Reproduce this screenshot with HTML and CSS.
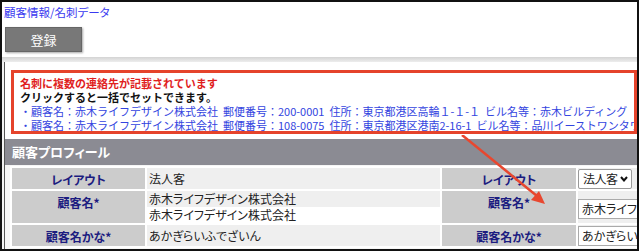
FILE: index.html
```html
<!DOCTYPE html>
<html lang="ja">

<head>
    <meta charset="UTF-8">
    <meta name="viewport" content="width=device-width, initial-scale=1.0">
    <title>名刺データ</title>
    <link rel="stylesheet" href="styles.css">
</head>

<body>
    <div class="frame">
        <div class="crumb"><a href="#">顧客情報/名刺データ</a></div>
        <div class="toolbar">
            <button class="btn">登録</button>
        </div>

        <div class="main">
            <div class="panel">
                <div class="notice">
                    <div class="notice-title">名刺に複数の連絡先が記載されています</div>
                    <div class="notice-sub">クリックすると一括でセットできます。</div>
                    <div class="contact">・顧客名：赤木ライフデザイン株式会社&nbsp; 郵便番号：200-0001&nbsp; 住所：東京都港区高輪１-１-１&nbsp; ビル名等：赤木ビルディング</div>
                    <div class="contact">・顧客名：赤木ライフデザイン株式会社&nbsp; 郵便番号：108-0075&nbsp; 住所：東京都港区港南2-16-1&nbsp; ビル名等：品川イーストワンタワー</div>
                </div>

                <div class="section-head">顧客プロフィール</div>
                <div class="section-body">
                    <table class="profile">
                        <colgroup>
                            <col class="c-label">
                            <col class="c-value">
                            <col class="c-label2">
                            <col class="c-edit">
                        </colgroup>
                        <tr class="row-short">
                            <th>レイアウト</th>
                            <td class="val">法人客</td>
                            <th>レイアウト</th>
                            <td class="val edit">
                                <div class="select">法人客
                                    <svg width="8" height="6" viewBox="0 0 8 6"><path d="M1 1 L4 4.5 L7 1" fill="none" stroke="#111" stroke-width="2"/></svg>
                                </div>
                            </td>
                        </tr>
                        <tr class="row-tall">
                            <th>顧客名*</th>
                            <td class="val multi">
                                <div class="line">赤木ライフデザイン株式会社</div>
                                <div class="line alt">赤木ライフデザイン株式会社</div>
                            </td>
                            <th>顧客名*</th>
                            <td class="val edit"><div class="input input-mid">赤木ライフデザイン株式会社</div></td>
                        </tr>
                        <tr class="row-short">
                            <th>顧客名かな*</th>
                            <td class="val">あかぎらいふでざいん</td>
                            <th>顧客名かな*</th>
                            <td class="val edit"><div class="input">あかぎらいふでざいん</div></td>
                        </tr>
                    </table>
                </div>

                <!-- arrow from the notice box down to the name field -->
                <svg class="arrow" width="120" height="90" viewBox="0 0 120 90">
                    <line x1="2" y1="0" x2="77" y2="61" stroke="#e8472f" stroke-width="2.5"/>
                    <polygon points="85,69 71,65 79,56" fill="#e8472f"/>
                </svg>
            </div>
        </div>
    </div>
</body>

</html>
```

FILE: styles.css
```css
body {
    margin: 0;
    background: #fff;
    font-family: "Noto Sans CJK JP", "Noto Sans", sans-serif;
    font-size: 12px;
}

.frame {
    width: 639px;
    height: 251px;
    border: 2px solid #111;
    box-sizing: border-box;
    overflow: hidden;
}

.crumb {
    padding: 2px 0 0 2px;
    height: 20px;
    line-height: 16px;
}

.crumb a {
    color: #3a3af0;
    text-decoration: none;
    font-size: 11.5px;
    font-feature-settings: "palt";
}

.toolbar {
    padding: 3px 0 0 3px;
    height: 33px;
    box-sizing: border-box;
}

.btn {
    width: 77px;
    height: 25px;
    background: #787878;
    color: #fff;
    border: 1px solid #666;
    box-shadow: 1px 1px 2px rgba(0, 0, 0, 0.35);
    font-family: inherit;
    font-size: 13px;
    cursor: pointer;
}

.main {
    border-top: 1px solid #d6d6d6;
    background: linear-gradient(#d9d9d9, #f2f2f2 5px);
    padding: 4px 0 0 2px;
    height: 200px;
}

.panel {
    position: relative;
    border-left: 1px solid #555;
    background: #fff;
    height: 100%;
    padding: 8px 0 0 0;
    box-sizing: border-box;
}

.notice {
    margin-left: 6px;
    border: 3px solid #e5432b;
    padding: 2px 0 1px 6px;
    height: 55px;
    font-size: 11px;
    line-height: 14px;
    white-space: nowrap;
    overflow: hidden;
}

.notice-title {
    color: #e01e1e;
    font-weight: bold;
    margin-top: 1px;
}

.notice-sub {
    color: #111;
    font-weight: bold;
}

.contact {
    color: #3344e0;
}

.section-head {
    margin-top: 5px;
    background: #8b8b93;
    color: #fff;
    font-weight: bold;
    font-size: 13px;
    height: 26px;
    line-height: 26px;
    padding-left: 7px;
    font-feature-settings: "palt";
}

.section-body {
    background: #f5f5f5;
    padding: 1px 0 0 5px;
    height: 90px;
    overflow: hidden;
}

.profile {
    table-layout: fixed;
    width: 780px;
    border-collapse: separate;
    border-spacing: 2px;
    background: #fff;
    white-space: nowrap;
}

.c-label {
    width: 133px;
}

.c-value {
    width: 293px;
}

.c-label2 {
    width: 134px;
}

.c-edit {
    width: 210px;
}

.profile th {
    background: #cccccc;
    color: #1c1c80;
    font-weight: bold;
    text-align: center;
    vertical-align: top;
    padding: 3px 0 0;
    font-feature-settings: "palt";
}

.profile .val {
    background: #efefef;
    color: #222;
    padding: 0 2px;
    vertical-align: middle;
    font-feature-settings: "palt";
}

.profile .val.edit {
    padding: 0;
}

.row-short {
    height: 21px;
}

.row-tall {
    height: 32px;
}

.profile .val.multi {
    padding: 0;
}

.line {
    height: 16px;
    line-height: 16px;
    padding-left: 2px;
}

.line.alt {
    background: #fff;
}

.select {
    display: inline-flex;
    align-items: center;
    gap: 2px;
    height: 18px;
    padding: 0 3px 0 4px;
    background: #fff;
    border: 1px solid #999;
    border-radius: 2px;
    letter-spacing: -0.5px;
}

.input {
    height: 18px;
    line-height: 18px;
    padding-left: 3px;
    background: #fff;
    border: 1px solid #aaa;
}

.input-mid {
    margin-top: 4px;
}

.arrow {
    position: absolute;
    left: 455px;
    top: 73px;
}
```
